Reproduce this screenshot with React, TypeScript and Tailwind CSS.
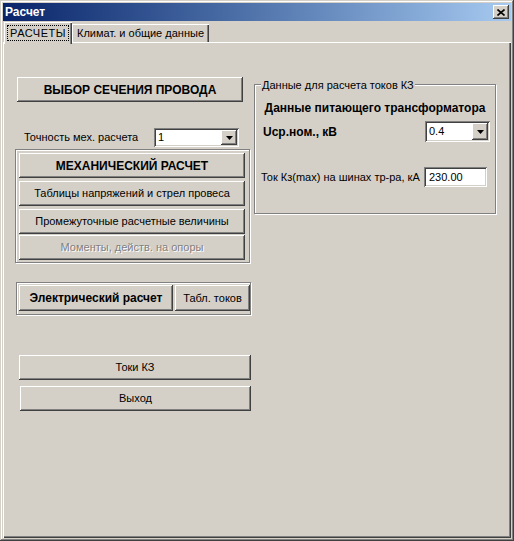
import React from "react";

const raised =
  "bg-[#d4d0c8] shadow-[inset_-1px_-1px_#404040,inset_1px_1px_#fff,inset_-2px_-2px_#808080]";
const sunken =
  "bg-white shadow-[inset_1px_1px_#808080,inset_-1px_-1px_#fff,inset_2px_2px_#404040,inset_-2px_-2px_#d4d0c8]";
const etched = "border border-[#808080] shadow-[inset_1px_1px_#fff,1px_1px_#fff]";

function Btn({
  children,
  className = "",
  bold = false,
  disabled = false,
}: {
  children: React.ReactNode;
  className?: string;
  bold?: boolean;
  disabled?: boolean;
}) {
  return (
    <div
      className={`flex items-center justify-center ${raised} ${
        bold ? "text-[12px] font-bold" : "text-[11px]"
      } ${disabled ? "text-[#808080] [text-shadow:1px_1px_0_#fff]" : "text-black"} ${className}`}
    >
      {children}
    </div>
  );
}

function Combo({ value, className }: { value: string; className: string }) {
  return (
    <div className={`flex p-[2px] ${sunken} ${className}`}>
      <span className="flex flex-1 items-center pl-[2px] text-[11px]">{value}</span>
      <div className={`flex w-[16px] items-center justify-center ${raised}`}>
        <svg width="7" height="4" viewBox="0 0 7 4">
          <path d="M0 0h7L3.5 4z" fill="#000" />
        </svg>
      </div>
    </div>
  );
}

export default function App() {
  return (
    <div className="flex h-[541px] w-[514px] flex-col bg-[#d4d0c8] p-[3px] font-['Liberation_Sans',Arial,sans-serif] text-black shadow-[inset_-1px_-1px_#404040,inset_1px_1px_#d4d0c8,inset_-2px_-2px_#808080,inset_2px_2px_#fff]">
      {/* title bar */}
      <div className="flex h-[18px] items-center justify-between bg-gradient-to-r from-[#0a246a] to-[#a6caf0] pl-[2px] pr-[2px]">
        <span className="text-[12px] font-bold text-white">Расчет</span>
        <div className={`flex h-[14px] w-[16px] items-center justify-center ${raised}`}>
          <svg width="8" height="7" viewBox="0 0 8 7">
            <path d="M0.5 0.5l7 6M7.5 0.5l-7 6" stroke="#000" strokeWidth="1.6" />
          </svg>
        </div>
      </div>

      {/* tabs */}
      <div className="relative z-10 flex h-[21px] items-end pl-[1px]">
        <div className="-mb-[2px] flex h-[22px] w-[68px] items-start justify-center bg-[#d4d0c8] pt-[3px] shadow-[inset_1px_1px_#fff,inset_-1px_0_#404040,inset_-2px_0_#808080]">
          <span className="flex h-[16px] w-[62px] items-center justify-center border border-dotted border-black text-[11px] tracking-[0.5px]">
            РАСЧЕТЫ
          </span>
        </div>
        <div className="flex h-[18px] w-[137px] items-center justify-center bg-[#d4d0c8] text-[11px] shadow-[inset_1px_1px_#fff,inset_-1px_0_#404040,inset_-2px_0_#808080]">
          Климат. и общие данные
        </div>
      </div>

      {/* tab page */}
      <div className="flex flex-1 shadow-[inset_1px_1px_#fff,inset_-1px_-1px_#404040,inset_-2px_-2px_#808080]">
        {/* left column */}
        <div className="ml-[12px] flex w-[239px] flex-col">
          <Btn bold className="ml-[2px] mt-[35px] h-[25px] w-[226px]">
            ВЫБОР СЕЧЕНИЯ ПРОВОДА
          </Btn>

          <div className="mt-[26px] flex h-[19px] items-center pl-[9px]">
            <span className="w-[130px] text-[11px]">Точность мех. расчета</span>
            <Combo value="1" className="h-[19px] w-[85px]" />
          </div>

          <div className={`mt-[2px] flex h-[114px] w-[235px] flex-col pl-[3px] pt-[3px] ${etched}`}>
            <Btn bold className="h-[25px] w-[226px]">
              МЕХАНИЧЕСКИЙ РАСЧЕТ
            </Btn>
            <Btn className="mt-[3px] h-[25px] w-[226px]">Таблицы напряжений и стрел провеса</Btn>
            <Btn className="mt-[3px] h-[25px] w-[226px]">Промежуточные расчетные величины</Btn>
            <Btn disabled className="mt-[1px] h-[25px] w-[226px]">
              Моменты, действ. на опоры
            </Btn>
          </div>

          <div className={`ml-[1px] mt-[19px] flex h-[33px] w-[235px] gap-[2px] pl-[2px] pt-[2px] ${etched}`}>
            <Btn bold className="h-[26px] w-[154px]">
              Электрический расчет
            </Btn>
            <Btn className="h-[26px] w-[75px]">Табл. токов</Btn>
          </div>

          <Btn className="ml-[4px] mt-[40px] h-[25px] w-[232px]">Токи КЗ</Btn>
          <Btn className="ml-[5px] mt-[6px] h-[25px] w-[231px]">Выход</Btn>
        </div>

        {/* right group box */}
        <div className={`relative mt-[42px] flex h-[130px] w-[242px] flex-col ${etched}`}>
          <span className="absolute -top-[8px] left-[6px] bg-[#d4d0c8] px-[1px] text-[11px]">
            Данные для расчета токов КЗ
          </span>
          <div className="mt-[16px] h-[14px] text-center text-[12px] font-bold leading-[14px]">
            Данные питающего трансформатора
          </div>
          <div className="mt-[6px] flex h-[21px] items-center pl-[8px]">
            <span className="w-[162px] text-[12px] font-bold">Uср.ном., кВ</span>
            <Combo value="0.4" className="h-[21px] w-[65px]" />
          </div>
          <div className="mt-[25px] flex h-[20px] items-center pl-[6px]">
            <span className="w-[163px] text-[11px]">Ток Кз(max) на шинах тр-ра, кА</span>
            <div className={`flex h-[20px] w-[63px] items-center pl-[5px] text-[11px] ${sunken}`}>230.00</div>
          </div>
        </div>
      </div>
    </div>
  );
}
